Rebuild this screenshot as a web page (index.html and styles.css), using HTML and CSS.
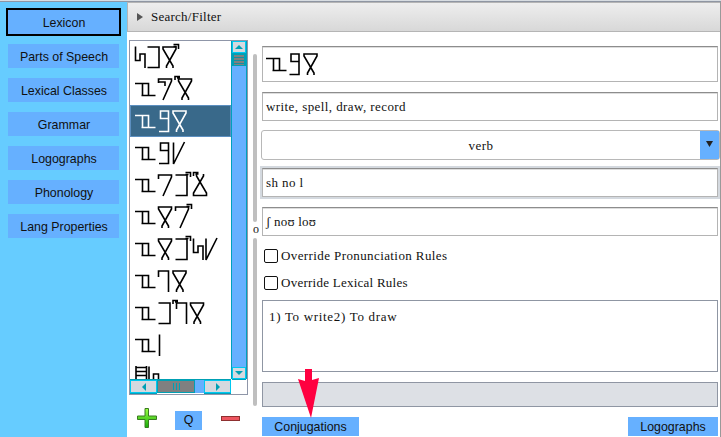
FILE: index.html
```html
<!DOCTYPE html>
<html lang="en">
<head>
<meta charset="utf-8">
<title>Lexicon</title>
<link rel="stylesheet" href="styles.css">
</head>
<body>
<svg class="defs" aria-hidden="true">
  <defs>
    <path id="zi" d="M0 10.5H13.500V22.500M7.500 10.5V22.500M6.500 22.500H20.500"/>
    <path id="nine" d="M10.5 13.500H2.500V6H10.500V26.500H1"/>
    <path id="ex" d="M11.500 27V25L1.500 8V6H14.500V8L5 25V27"/>
    <path id="xe" d="M11.500 5V7L1.500 24V26.500H14.500V24L4.500 7V5"/>
    <path id="seven" d="M1.500 10V6H14.500V8L6 27"/>
    <path id="hook" d="M1 12V6H11V27"/>
    <path id="bracket" d="M1 6H12.500V26.500H1"/>
    <path id="chair" d="M.5 5.500V19.500H5V13H10V27"/>
    <path id="slash" d="M1.500 5.500V27L12.500 5"/>
    <path id="bar" d="M1.500 5.500V27"/>
    <path id="ladder" d="M1 5V27M11.500 5V27M1 6.500H11M1 10.500H11M1 14.500H11"/>
    <path id="tickr" d="M0 3.500H5V8M0 5.500H3"/>
    <path id="tickl" d="M6 3.500H1V7M6 5H3"/>
  </defs>
</svg>
<div class="app">
  <nav class="side">
    <button class="btn active">Lexicon</button>
    <button class="btn">Parts of Speech</button>
    <button class="btn">Lexical Classes</button>
    <button class="btn">Grammar</button>
    <button class="btn">Logographs</button>
    <button class="btn">Phonology</button>
    <button class="btn">Lang Properties</button>
  </nav>
  <main class="main">
    <header class="filter"><span class="tri"></span>Search/Filter</header>
    <div class="body">
      <section class="left">
        <div class="list">
          <div class="rows">
            <svg class="row"><use href="#chair" x="5"/><use href="#bracket" x="16.500"/><use href="#ex" x="31.500"/><use href="#tickr" x="43.500"/></svg>
            <svg class="row"><use href="#zi" x="5"/><use href="#seven" x="27"/><path d="M29 9H35V13"/><use href="#tickl" x="44"/><use href="#ex" x="47"/></svg>
            <svg class="row sel"><use href="#zi" x="5"/><use href="#nine" x="28"/><use href="#ex" x="41.500"/></svg>
            <svg class="row"><use href="#zi" x="5"/><use href="#nine" x="28"/><use href="#slash" x="42"/></svg>
            <svg class="row"><use href="#zi" x="5"/><use href="#seven" x="27"/><use href="#bracket" x="44.500"/><use href="#tickr" x="55.500"/><use href="#tickl" x="62.500"/><use href="#xe" x="62"/></svg>
            <svg class="row"><use href="#zi" x="5"/><use href="#ex" x="27"/><use href="#seven" x="44"/><use href="#tickr" x="56.500"/></svg>
            <svg class="row"><use href="#zi" x="5"/><use href="#ex" x="27"/><use href="#bracket" x="44.500"/><use href="#tickr" x="55.500"/><use href="#chair" x="63"/><use href="#slash" x="74.500"/></svg>
            <svg class="row"><use href="#zi" x="5"/><use href="#hook" x="27.500"/><use href="#ex" x="41.500"/></svg>
            <svg class="row"><use href="#zi" x="5"/><use href="#bracket" x="27.500"/><use href="#tickl" x="42"/><use href="#hook" x="45.500"/><use href="#ex" x="59"/></svg>
            <svg class="row"><use href="#zi" x="5"/><use href="#bar" x="28"/></svg>
            <svg class="row"><use href="#ladder" x="5"/><use href="#chair" x="18.500"/></svg>
          </div>
          <div class="vbar">
            <span class="sb up"><svg width="8" height="4"><path d="M0 4L4 0L8 4Z"/></svg></span>
            <span class="vthumb"></span>
            <span class="vspace"></span>
            <span class="sb down"><svg width="8" height="4"><path d="M0 0L4 4L8 0Z"/></svg></span>
          </div>
          <div class="hbar">
            <span class="sb side-btn"><svg width="4" height="8"><path d="M4 0L0 4L4 8Z"/></svg></span>
            <span class="hthumb"><i></i><i></i><i></i></span>
            <span class="hspace"></span>
            <span class="sb side-btn"><svg width="4" height="8"><path d="M0 0L4 4L0 8Z"/></svg></span>
          </div>
        </div>
        <div class="tools">
          <svg class="plus" width="22" height="22"><defs><linearGradient id="g" x2="0" y2="1"><stop stop-color="#9dff45"/><stop offset="1" stop-color="#16ae08"/></linearGradient></defs><path d="M9 1.500H12.500V9H20.500V12.500H12.500V20.500H9V12.500H1.500V9H9Z" fill="url(#g)" stroke="#397a20"/></svg>
          <button class="btn q">Q</button>
          <span class="minus"></span>
        </div>
      </section>
      <div class="split"><span class="track"></span><span class="knob">o</span><span class="track"></span></div>
      <section class="form">
        <div class="field word"><svg class="glyphs"><use href="#zi" x="3"/><use href="#nine" x="25.500"/><use href="#ex" x="39.500"/></svg></div>
        <div class="field">write, spell, draw, record</div>
        <div class="select"><span class="value">verb</span><span class="drop"><svg width="7" height="6"><path d="M0 0H7L3.500 6Z"/></svg></span></div>
        <div class="field focus">sh no l</div>
        <div class="field ipa">ʃ noʊ loʊ</div>
        <label class="check"><span class="box"></span>Override Pronunciation Rules</label>
        <label class="check second"><span class="box"></span>Override Lexical Rules</label>
        <div class="notes">1) To write2) To draw</div>
        <div class="status"></div>
        <div class="actions"><button class="btn conj">Conjugations</button><button class="btn logo">Logographs</button></div>
        <svg class="arrow" width="22" height="50"><path d="M7 0H14V11L21 9L13 49L0 10L7 12Z"/></svg>
      </section>
    </div>
  </main>
</div>
</body>
</html>
```

FILE: styles.css
```css
* { box-sizing: border-box; }
body { margin: 0; width: 721px; height: 437px; overflow: hidden; background: #fff; color: #111; font: 13px "Liberation Serif", serif; }
.defs { position: absolute; width: 0; height: 0; }
.app { display: flex; height: 437px; border-top: 1px solid #d8dde2; box-shadow: inset 0 1px #8f96a3; }
.side { width: 127px; margin-top: 1px; padding: 8px 8px 0; background: #66ccff; display: flex; flex-direction: column; gap: 10px; }
.btn { border: 0; padding: 3px 0 0; margin: 0; background: #66b0ff; color: #111; height: 24px; width: 111px; font: 12.4px/21px "Liberation Sans", sans-serif; letter-spacing: 0; text-align: center; flex: none; }
.side .btn { padding-left: 1px; }
.btn.active { box-shadow: 0 0 0 2px #000; }
.main { flex: 1; margin-top: 1px; border-right: 1px solid #999; display: flex; flex-direction: column; }
.filter { height: 30px; border: 1px solid #b5b5b5; border-width: 1px 0 1px 1px; background: linear-gradient(#eee, #d8d8d8); display: flex; align-items: center; padding: 0 0 1px 9px; letter-spacing: .25px; }
.tri { border-left: 6px solid #555; border-top: 4px solid transparent; border-bottom: 4px solid transparent; margin-right: 8px; }
.body { display: flex; flex: 1; }
.left { width: 121px; padding: 8px 0 0 2px; }
.list { width: 119px; height: 355px; border: 1px solid #8f96a8; display: grid; grid-template: 338px 15px / 101px 16px; background: #fff; }
.rows { overflow: hidden; height: 338px; }
.row { display: block; width: 101px; height: 32px; fill: none; stroke: #000; stroke-width: 1.6; }
.row.sel { background: #39698a; stroke: #fff; box-shadow: inset 0 0 0 1px #5c8fc0; }
.vbar { background: #66b0ff; display: flex; flex-direction: column; border: 1px solid #00a0bc; border-width: 0 1px; }
.sb { background: #d6d9df; border: 1px solid #00c8f0; box-shadow: 0 1px #00a0bc; display: flex; align-items: center; justify-content: center; flex: none; }
.sb svg { fill: #00a0b4; }
.up, .down { height: 12px; }
.vthumb { height: 12px; margin-top: 1px; background: repeating-linear-gradient(#808080 0 2px, #178e9e 2px 3px); border: 1px solid #00a0b4; border-width: 1px 2px; }
.vspace, .hspace { flex: 1; }
.hbar { display: flex; width: 101px; height: 14px; background: #66b0ff; border-top: 1px solid #00a0b4; }
.side-btn { width: 27px; }
.hthumb { width: 38px; background: #808080; border: 1px solid #00a0b4; display: flex; justify-content: center; align-items: center; gap: 2px; }
.hthumb i { width: 1px; height: 7px; background: #00a0b4; }
.tools { display: flex; align-items: center; height: 24px; margin-top: 11px; padding-left: 7px; }
.btn.q { width: 27px; height: 19px; margin: 5px 19px 0 17px; padding: 0; line-height: 19px; }
.plus { flex: none; }
.minus { width: 19px; height: 5px; background: #ee5560; border: 1px solid #8e3030; }
.split { width: 14px; padding: 22px 0 0 5px; display: flex; flex-direction: column; align-items: flex-start; }
.track { width: 4px; height: 168px; border-radius: 2px; background: #bfbfbf; }
.knob { height: 16px; font-size: 12px; line-height: 14px; }
.form { position: relative; width: 456px; padding-top: 14px; display: flex; flex-direction: column; }
.field { height: 29px; flex: none; border: 1px solid #b4b4b4; border-top-color: #8d8d8d; box-shadow: inset 0 1px #ddd; padding-left: 3px; line-height: 27px; letter-spacing: .42px; margin-bottom: 9px; white-space: pre; }
.field.word { height: 36px; margin-bottom: 10px; padding: 0; }
.glyphs { display: block; width: 100px; height: 33px; fill: none; stroke: #000; stroke-width: 1.6; margin-top: 1px; }
.select { display: flex; height: 30px; flex: none; margin: 0 -2px 8px -1px; border: 1px solid #b8b8b8; border-radius: 3px; }
.value { flex: 1; text-align: center; line-height: 29px; letter-spacing: .42px; }
.drop { width: 19px; background: #66b0ff; display: flex; align-items: center; justify-content: center; padding-bottom: 3px; }
.drop svg { fill: #222; }
.field.focus { outline: 2px solid #d4d9df; margin-bottom: 10px; }
.field.ipa { margin-bottom: 12px; letter-spacing: .2px; }
.check { display: flex; align-items: center; height: 16px; margin: 0 0 11px 2px; letter-spacing: .4px; }
.check.second { margin-bottom: 9px; letter-spacing: .25px; }
.box { width: 14px; height: 14px; border: 1px solid #111; border-radius: 2px; margin-right: 3px; }
.notes { height: 72px; border: 1px solid #8f96a3; padding: 8px 6px; letter-spacing: .68px; flex: none; }
.status { height: 25px; border: 1px solid #8f96a3; margin-top: 10px; background: #dde0e5; flex: none; }
.actions { display: flex; justify-content: space-between; margin-top: 10px; }
.actions .btn { height: 19px; padding: 0; }
.btn.conj { width: 97px; }
.btn.logo { width: 90px; }
.arrow { position: absolute; left: 36px; top: 337px; fill: #ff0040; }
```
